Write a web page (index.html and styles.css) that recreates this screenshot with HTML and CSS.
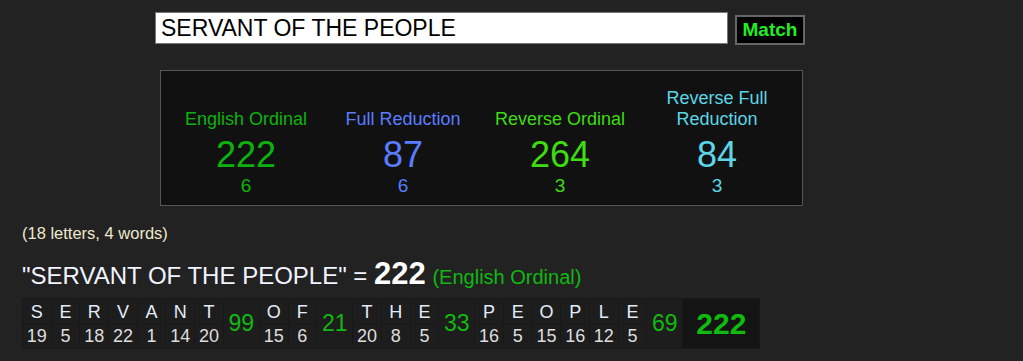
FILE: index.html
```html
<!DOCTYPE html>
<html>
<head>
    <meta name="viewport" content="width=device-width, initial-scale=1">
    <link rel="stylesheet" href="styles.css">
</head>

<body>
    <div id="page">
        <form id="search-form" onsubmit="event.preventDefault();">
            <input type="text" id="phrase-input" value="SERVANT OF THE PEOPLE">
            <button type="submit" id="match-button">Match</button>
        </form>

        <div id="cipher-box">
            <div class="cipher eng-ord">
                <p class="cipher-name">English Ordinal</p>
                <p class="cipher-value">222</p>
                <p class="cipher-root">6</p>
            </div>
            <div class="cipher full-red">
                <p class="cipher-name">Full Reduction</p>
                <p class="cipher-value">87</p>
                <p class="cipher-root">6</p>
            </div>
            <div class="cipher rev-ord">
                <p class="cipher-name">Reverse Ordinal</p>
                <p class="cipher-value">264</p>
                <p class="cipher-root">3</p>
            </div>
            <div class="cipher rev-full-red">
                <p class="cipher-name">Reverse Full Reduction</p>
                <p class="cipher-value">84</p>
                <p class="cipher-root">3</p>
            </div>
        </div>

        <p id="letter-count">(18 letters, 4 words)</p>

        <h2 id="phrase-sum">"SERVANT OF THE PEOPLE" = <b>222</b> <span class="sum-cipher">(English Ordinal)</span></h2>

        <table id="breakdown">
            <tr>
                <td class="ch">S</td><td class="ch">E</td><td class="ch">R</td><td class="ch">V</td><td class="ch">A</td><td class="ch">N</td><td class="ch">T</td>
                <td class="word-sum" rowspan="2">99</td>
                <td class="ch">O</td><td class="ch">F</td>
                <td class="word-sum" rowspan="2">21</td>
                <td class="ch">T</td><td class="ch">H</td><td class="ch">E</td>
                <td class="word-sum" rowspan="2">33</td>
                <td class="ch">P</td><td class="ch">E</td><td class="ch">O</td><td class="ch">P</td><td class="ch">L</td><td class="ch">E</td>
                <td class="word-sum" rowspan="2">69</td>
                <td class="total" rowspan="2">222</td>
            </tr>
            <tr>
                <td class="num">19</td><td class="num">5</td><td class="num">18</td><td class="num">22</td><td class="num">1</td><td class="num">14</td><td class="num">20</td>
                <td class="num">15</td><td class="num">6</td>
                <td class="num">20</td><td class="num">8</td><td class="num">5</td>
                <td class="num">16</td><td class="num">5</td><td class="num">15</td><td class="num">16</td><td class="num">12</td><td class="num">5</td>
            </tr>
        </table>
    </div>
</body>
</html>
```

FILE: styles.css
```css
* {
    box-sizing: border-box;
    font-family: 'Liberation Sans', Arial, sans-serif;
}

body {
    background: #222;
    margin: 0;
    color: #eee;
}

#page {
    padding: 12px 0 0 22px;
}

/* search bar */
#search-form {
    display: flex;
    align-items: flex-start;
    margin: 0 0 0 133px;
    height: 33px;
}

#phrase-input {
    width: 573px;
    height: 32px;
    margin: 0;
    padding: 0 5px;
    border: 1px solid #767676;
    background: #fff;
    color: #000;
    font-size: 23px;
}

#match-button {
    margin: 3px 0 0 7px;
    width: 70px;
    height: 30px;
    padding: 0;
    border: 2px solid #666;
    background: #000;
    color: #22ee22;
    font-size: 19px;
    font-weight: bold;
    cursor: pointer;
}

/* cipher totals */
#cipher-box {
    margin: 25px 0 0 138px;
    width: 643px;
    border: 1px solid #555;
    background: #111;
    padding: 17px 0 8px;
    display: flex;
    justify-content: center;
    align-items: flex-end;
}

.cipher {
    width: 157px;
    text-align: center;
}

.cipher p {
    margin: 0;
}

.cipher-name {
    font-size: 18px;
    line-height: 21px;
    margin-bottom: 5px !important;
}

.cipher-value {
    font-size: 36px;
    line-height: 40px;
}

.cipher-root {
    font-size: 19px;
    line-height: 22px;
}

.eng-ord p { color: #0db30d; }
.full-red p { color: #5a7cff; }
.rev-ord p { color: #3edc10; }
.rev-full-red p { color: #5cd6e6; }

#letter-count {
    margin: 18px 0 0;
    font-size: 16.5px;
    line-height: 18px;
    color: #eee8cc;
}

#phrase-sum {
    margin: 19px 0 0;
    font-size: 24px;
    line-height: 26px;
    font-weight: normal;
    color: #f2f4ff;
}

#phrase-sum b {
    font-size: 31px;
    color: #fff;
}

.sum-cipher {
    font-size: 20px;
    color: #10b810;
}

/* letter breakdown */
#breakdown {
    margin-top: 8px;
    border-collapse: collapse;
    background: #1d1d1d;
}

#breakdown td {
    padding: 0;
    text-align: center;
    border: 1px solid #181818;
}

.ch {
    width: 28.7px;
    height: 26px;
    padding-top: 2px !important;
    font-size: 18px;
    color: #e2ecfa;
}

.num {
    height: 24px;
    font-size: 18px;
    color: #ddd;
}

.word-sum {
    width: 36px;
    font-size: 23px;
    color: #12b812;
}

.total {
    width: 77px;
    font-size: 30px;
    font-weight: bold;
    color: #10bb10;
    background: #141414;
}
```
